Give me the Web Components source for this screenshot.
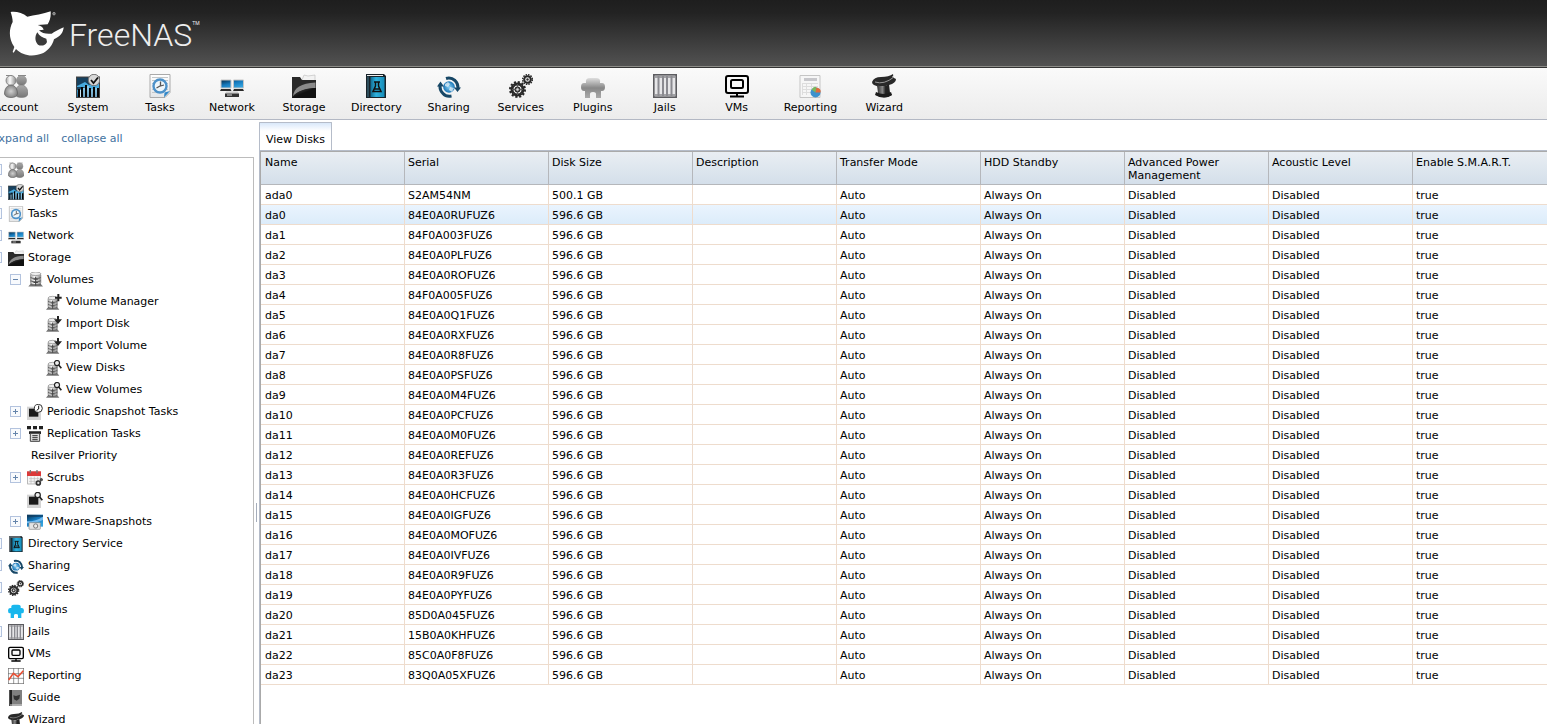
<!DOCTYPE html>
<html lang="en">
<head>
<meta charset="utf-8">
<title>FreeNAS</title>
<style>
  html, body {
    height: 100%;
    margin: 0;
    overflow: hidden;
  }
  body {
    font: 11px/13px Verdana, "DejaVu Sans", sans-serif;
    color: #000;
    background: #fff;
  }
</style>
</head>
<body>
<nas-app>
  <nas-header slot="header"></nas-header>

  <tool-bar slot="toolbar">
    <tool-button icon="account">Account</tool-button>
    <tool-button icon="system">System</tool-button>
    <tool-button icon="tasks">Tasks</tool-button>
    <tool-button icon="network">Network</tool-button>
    <tool-button icon="storage">Storage</tool-button>
    <tool-button icon="directory">Directory</tool-button>
    <tool-button icon="sharing">Sharing</tool-button>
    <tool-button icon="services">Services</tool-button>
    <tool-button icon="plugins">Plugins</tool-button>
    <tool-button icon="jails">Jails</tool-button>
    <tool-button icon="vms">VMs</tool-button>
    <tool-button icon="reporting">Reporting</tool-button>
    <tool-button icon="wizard">Wizard</tool-button>
  </tool-bar>

  <nav-tree slot="sidebar">
    <tree-node icon="account" label="Account" expandable></tree-node>
    <tree-node icon="system" label="System" expandable></tree-node>
    <tree-node icon="tasks" label="Tasks" expandable></tree-node>
    <tree-node icon="network" label="Network" expandable></tree-node>
    <tree-node icon="storage" label="Storage" expandable open>
      <tree-node icon="volumes" label="Volumes" expandable open>
        <tree-node icon="volume-add" label="Volume Manager"></tree-node>
        <tree-node icon="volume-import" label="Import Disk"></tree-node>
        <tree-node icon="volume-import" label="Import Volume"></tree-node>
        <tree-node icon="volume-view" label="View Disks"></tree-node>
        <tree-node icon="volume-view" label="View Volumes"></tree-node>
      </tree-node>
      <tree-node icon="periodic" label="Periodic Snapshot Tasks" expandable></tree-node>
      <tree-node icon="replication" label="Replication Tasks" expandable></tree-node>
      <tree-node label="Resilver Priority"></tree-node>
      <tree-node icon="scrubs" label="Scrubs" expandable></tree-node>
      <tree-node icon="snapshots" label="Snapshots"></tree-node>
      <tree-node icon="vmware" label="VMware-Snapshots" expandable></tree-node>
    </tree-node>
    <tree-node icon="directory" label="Directory Service" expandable></tree-node>
    <tree-node icon="sharing" label="Sharing" expandable></tree-node>
    <tree-node icon="services" label="Services" expandable></tree-node>
    <tree-node icon="plugins-blue" label="Plugins"></tree-node>
    <tree-node icon="jails" label="Jails" expandable></tree-node>
    <tree-node icon="vms" label="VMs"></tree-node>
    <tree-node icon="chart" label="Reporting"></tree-node>
    <tree-node icon="guide" label="Guide"></tree-node>
    <tree-node icon="wizard" label="Wizard"></tree-node>
  </nav-tree>

  <tab-pane label="View Disks">
    <disk-grid selected="da0"></disk-grid>
  </tab-pane>
</nas-app>

<script>
// Volume stack shared by the volume icons; the overlays go on top of it.
const STACK = `
  <path d="M3 20l-3 3.500h20L17 20z" fill="#777"/>
  <rect x="3" y="5" width="14" height="16" rx="3" fill="url(#metal)" stroke="#888"/>
  <ellipse cx="10" cy="6" rx="7" ry="2.500" fill="#eee" stroke="#888"/>
  <path d="M3 11c2 2 12 2 14 0M3 15.500c2 2 12 2 14 0M3 20c2 2 12 2 14 0" fill="none" stroke="#666" stroke-width="1.500"/>
  <path d="M10 10v12M7 13.500h6M7 18h6" stroke="#444" stroke-width="1.500"/>`;

const PUZZLE = "M5 9q-1-5 4-5h6q5 0 4 5h2q3 0 3 4t-3 4h-1v7h-5v-4q0-2-3-2t-3 2v4H4v-7H3q-3 0-3-4t3-4z";

const CAMERA = `
  <rect x="0" y="4" width="21" height="20" fill="#d4d4d4"/>
  <rect x="3" y="7" width="14" height="12" fill="#1b1b1b"/>`;

// Every icon is drawn on a 24 x 24 grid.
const ICONS = {
  account: `
    <circle cx="17.500" cy="6.500" r="5" fill="url(#gray)" stroke="#888" stroke-width=".6"/>
    <path d="M11 20c0-12 13-12 13 0q-1 3.500-6.500 3.500T11 20z" fill="url(#gray)" stroke="#777" stroke-width=".6"/>
    <circle cx="7" cy="6.500" r="5" fill="url(#metal)" stroke="#777" stroke-width=".8"/>
    <path d="M.5 20c0-12 13-12 13 0q-1 3.500-6.500 3.500T.5 20z" fill="url(#ball)" stroke="#666" stroke-width=".8"/>
    <path d="M2 1.500h6M14 1.500h8" stroke="#888"/>`,
  system: `
    <rect x=".5" y="3" width="23" height="20.500" fill="url(#blue)" stroke="#444"/>
    <path d="M1 4h22v5L1 16z" fill="#17415f"/>
    <path d="M1 12l8-4 4 3 5-3 5 1v4H1z" fill="#47a9dc"/>
    <path d="M2 15h2v8H2zM5 13h2v10H5zM9 11h2v12H9zM13 14h2v9h-2zM17 13h2v10h-2zM21 14h2v9h-2z" fill="#050505"/>
    <path d="M4.500 16v7M8 14v9M12 12v11M16 15v8M20 14v9" stroke="#c9e6f5"/>
    <circle cx="18" cy="6" r="5.700" fill="#d8d8d8" stroke="#777"/>
    <path d="M15 6l2.500 3L22 3.500" fill="none" stroke="#111" stroke-width="1.800"/>`,
  tasks: `
    <path d="M2 .5h20v18l-5 5H2z" fill="url(#paper)" stroke="#aaa"/>
    <path d="M4 3.500h16M4 6.500h16M4 9.500h16M4 15.500h16M4 18.500h12" stroke="#c4c8ca"/>
    <circle cx="12" cy="12" r="6.500" fill="#edf6fb" stroke="#4c91c9" stroke-width="2.400"/>
    <path d="M12.500 7.500V12l3.500-1M12 12l-3.500 2" fill="none" stroke="#555" stroke-width="1.300"/>
    <path d="M22 17l-6 6.500.5-5z" fill="#3187c8"/>`,
  network: `
    <path d="M1 6h10v8H1zM13.500 6h10v8h-10z" fill="url(#screen)" stroke="#c5c5c5"/>
    <path d="M1 15h9.500l1 2H0zM14 15h9l1 2H13z" fill="#2a2a2a"/>
    <path d="M5 19.500h14l-1.500-2h-11z" fill="#ccc"/>
    <rect x="5" y="19.500" width="14" height="3.500" fill="#333"/>
    <path d="M7 21h5" stroke="#ddd"/>`,
  storage: `
    <path d="M10 6l2-5 4 1 7-1v7H10z" fill="#f2f2f2" stroke="#bbb" stroke-width=".6"/>
    <path d="M0 3h8l2 3h14v18H0z" fill="#292929"/>
    <path d="M1 22C2 14 9 9 23.500 8.500V14C11 15 5 18 1 22z" fill="#8a8a8a"/>
    <path d="M0 24c5-8 16-10 24-10v10z" fill="url(#shade)"/>`,
  directory: `
    <path d="M2 0h18l2 2v22H2z" fill="#18232a"/>
    <path d="M3 1.500h16" stroke="#eee"/>
    <rect x="6.500" y="3" width="14" height="20" fill="url(#cyan)"/>
    <path d="M4 2.500V23" stroke="#345c6d" stroke-width="1.500"/>
    <path d="M10 8h6M11.500 8v4L9 17.500h8L14.500 12V8M10.500 15h5" fill="none" stroke="#111" stroke-width="1.500"/>`,
  sharing: `
    <circle cx="12" cy="13" r="5.800" fill="url(#globe)"/>
    <path d="M8 10l3-2 2 2-2 3-3-1zM13 13l4 1-2 4-3-2z" fill="#fff" opacity=".65"/>
    <path d="M9 4.500Q14 3 18 6.500 21.500 10 21 15M14.500 22Q9 23 6 19.500 2.500 16 3 11" fill="none" stroke="#174766" stroke-width="3"/>
    <path d="M17 13.500h7L20.500 18zM0 12.500h7L3.500 7.500z" fill="#174766"/>`,
  services: `
    <g fill="none" stroke="#292929">
      <circle cx="8.500" cy="15.500" r="7.500" stroke-width="2" stroke-dasharray="2.200 1.730"/>
      <circle cx="8.500" cy="15.500" r="5.500" stroke-width="3"/>
      <circle cx="8.500" cy="15.500" r="2" stroke-width="2"/>
      <path d="M8.500 10v11M3 15.500h11M4.500 11.500l8 8M12.500 11.500l-8 8" stroke="#555"/>
      <circle cx="18.500" cy="5.500" r="4.800" stroke-width="1.500" stroke-dasharray="1.500 1.010"/>
      <circle cx="18.500" cy="5.500" r="3.300" stroke-width="2"/>
    </g>
    <circle cx="8.500" cy="15.500" r="1.200" fill="#ddd"/>
    <circle cx="18.500" cy="5.500" r="1.200" fill="#333"/>`,
  plugins: `<path d="${PUZZLE}" fill="url(#puzzle)"/>`,
  "plugins-blue": `<path d="${PUZZLE}" fill="#19b7ed"/>`,
  jails: `
    <rect x=".8" y=".8" width="22.400" height="22.400" fill="#e6e6e8" stroke="#5c5c60" stroke-width="1.600"/>
    <path d="M5.500 2v20M10 2v20M14 2v20M18.500 2v20" stroke="#8a8a90" stroke-width="2"/>
    <path d="M2 3h20M2 21h20" stroke="#8c8c90" stroke-width="1.500"/>`,
  vms: `
    <rect x="1" y="2" width="22" height="17" rx="2" fill="#f8f8f8" stroke="#000" stroke-width="2"/>
    <rect x="6" y="6" width="12" height="8" rx="1.500" fill="#f8f8f8" stroke="#000" stroke-width="2"/>
    <path d="M12 19v3M5 22.500h14" stroke="#000" stroke-width="2"/>`,
  reporting: `
    <path d="M2 1.500h20v22H2z" fill="#f6f6f6" stroke="#c5c5c5"/>
    <path d="M6 4h13v3H6z" fill="#c7c7cb"/>
    <path d="M4 9.500h16M4 12.500h16M4 15.500h16M4 18.500h16M4.500 9v12M8.500 9v12M13.500 9v12" stroke="#ddd"/>
    <circle cx="17.500" cy="18.500" r="5" fill="#3c91cd"/>
    <path d="M17.500 18.500l-4-3q3-4 5-2z" fill="#7bb75c"/>
    <path d="M17.500 18.500l1-5q5 1 4 5z" fill="#e06a39"/>`,
  wizard: `
    <path d="M0 8q2-5 9-5 8 0 12-3 1 2-1 3l4 2q0 4-7 6-9 3-15 0-2-1-2-3z" fill="#292929"/>
    <path d="M5 11q7 3 12-1l1 9 2 2q-8 5-16 0l2-2z" fill="url(#hat)"/>
    <path d="M4 18q8 4 15 0l1 3q-8 5-17 0z" fill="#1c1c1c"/>
    <path d="M3 8q9 3 19-5" fill="none" stroke="#999"/>`,
  volumes: `<g transform="translate(2 -4) scale(1.100)">${STACK}</g>`,
  "volume-add": `${STACK}<path d="M18.500 0v11M13.500 5.500h10" stroke="#222" stroke-width="3"/>`,
  "volume-import": `${STACK}<path d="M16.500 0h3v5H24l-6 7-6-7h4.500z" fill="#222"/>`,
  "volume-view": `${STACK}
    <circle cx="16.500" cy="4.500" r="3.800" fill="#eee" stroke="#222" stroke-width="1.800"/>
    <path d="M19 7.500l4 5" stroke="#222" stroke-width="2.500"/>`,
  periodic: `${CAMERA}
    <circle cx="17" cy="6.500" r="6" fill="#fff" stroke="#333" stroke-width="1.500"/>
    <path d="M17.500 2.500v5l-3 2" fill="none" stroke="#111" stroke-width="1.500"/>`,
  replication: `
    <path d="M0 0h6v5H0zM9 0h6v5H9zM18 0h6v5h-6zM3 8h18v4H3z" fill="#222"/>
    <path d="M5 11h14v12H5z" fill="#ddd" stroke="#444" stroke-width="1.500"/>
    <path d="M8 14.500h8M8 17.500h8M8 20.500h8" stroke="#333" stroke-width="1.500"/>`,
  scrubs: `
    <rect x="1" y="3" width="19" height="18" fill="#f6f6f6" stroke="#999"/>
    <path d="M0 2h21v7H0z" fill="#dc3939"/>
    <path d="M5 0v5M15 0v5" stroke="#777" stroke-width="2"/>
    <path d="M3 13h16M3 17h16M6 10v11M11 10v11M16 10v11" stroke="#bbb"/>
    <circle cx="17" cy="19.500" r="3" fill="#ddd" stroke="#333" stroke-width="2.500"/>
    <circle cx="21.500" cy="14.500" r="1.800" fill="#555" stroke="#222"/>`,
  snapshots: `${CAMERA}
    <circle cx="16" cy="4.500" r="4" fill="#eee" stroke="#222" stroke-width="1.800"/>
    <path d="M19 7.500l4 5" stroke="#222" stroke-width="2.500"/>`,
  vmware: `
    <rect x="0" y="1" width="24" height="18" fill="url(#screen)"/>
    <path d="M0 3h24" stroke="#123d61" stroke-width="2"/>
    <path d="M0 11q14 0 24-7v5Q13 14 0 14z" fill="#71baf0"/>
    <rect x="3" y="13" width="17" height="10" rx="1" fill="#e4e4e4" stroke="#888"/>
    <circle cx="13" cy="18" r="3.200" fill="#eee" stroke="#777" stroke-width="1.500"/>`,
  chart: `
    <rect x=".7" y=".7" width="22.600" height="22.600" fill="#fff"/>
    <path d="M.7 0v24M8.500 0v24M15.500 0v24M23.300 0v24M0 .7h24M0 8.500h24M0 15.500h24M0 23.300h24" stroke="#666"/>
    <path d="M1 18l7-10 7 5 8-9" fill="none" stroke="#e94e32" stroke-width="2.400"/>`,
  guide: `
    <path d="M2 0h19v24H2z" fill="#808080"/>
    <path d="M2 0h4v24H2z" fill="#222"/>
    <path d="M3 22.500h18" stroke="#ddd" stroke-width="1.500"/>
    <path d="M8 8l4 1 6-2-1 6-4 3-4-2z" fill="#333"/>`,
};

const DEFS = `
  <defs>
    <linearGradient id="metal"><stop stop-color="#aaa"/><stop offset=".4" stop-color="#fafafa"/><stop offset="1" stop-color="#8a8a8a"/></linearGradient>
    <linearGradient id="gray" x2="0" y2="1"><stop stop-color="#aaa"/><stop offset="1" stop-color="#777"/></linearGradient>
    <radialGradient id="ball"><stop stop-color="#d0d0d0"/><stop offset="1" stop-color="#858585"/></radialGradient>
    <linearGradient id="blue" x2="0" y2="1"><stop stop-color="#16334b"/><stop offset=".5" stop-color="#4bb0e2"/><stop offset="1" stop-color="#145a88"/></linearGradient>
    <linearGradient id="paper" x2="0" y2="1"><stop stop-color="#fff"/><stop offset="1" stop-color="#e4e6e8"/></linearGradient>
    <linearGradient id="screen" x2=".7" y2="1"><stop stop-color="#062d4b"/><stop offset=".5" stop-color="#1579bd"/><stop offset="1" stop-color="#35a4df"/></linearGradient>
    <linearGradient id="shade" x2="1" y2="1"><stop stop-color="#555"/><stop offset=".5" stop-color="#111"/></linearGradient>
    <linearGradient id="cyan"><stop stop-color="#116b91"/><stop offset=".4" stop-color="#2eb2df"/><stop offset="1" stop-color="#168cb8"/></linearGradient>
    <radialGradient id="globe"><stop stop-color="#8cd1f4"/><stop offset="1" stop-color="#1673b5"/></radialGradient>
    <linearGradient id="puzzle" x2="0" y2="1"><stop stop-color="#dedede"/><stop offset=".5" stop-color="#888"/><stop offset="1" stop-color="#aaa"/></linearGradient>
    <linearGradient id="hat"><stop stop-color="#1b1b1b"/><stop offset=".4" stop-color="#888"/><stop offset=".6" stop-color="#222"/></linearGradient>
  </defs>`;

/**
 * <nas-icon name="..."> draws one entry of ICONS. The icon is 24px
 * wide unless its user sets --icon-size.
 */
class NasIcon extends HTMLElement {
  constructor() {
    super();
    this.attachShadow({ mode: "open" });
  }

  connectedCallback() {
    this.shadowRoot.innerHTML = `
      <style>
        :host {
          display: block;
          flex: none;
          width: var(--icon-size, 24px);
          height: var(--icon-size, 24px);
        }
        svg { display: block; width: 100%; height: 100%; }
      </style>
      <svg viewBox="0 0 24 24" aria-hidden="true">${DEFS}${ICONS[this.getAttribute("name")]}</svg>
    `;
  }
}

/**
 * The page frame. It has the slots "header", "toolbar" and "sidebar",
 * and everything else goes to the right of the splitter.
 */
class NasApp extends HTMLElement {
  constructor() {
    super();
    this.attachShadow({ mode: "open" });
    this.shadowRoot.append(NasApp.template.content.cloneNode(true));
  }
}

NasApp.template = document.createElement("template");
NasApp.template.innerHTML = `
  <style>
    :host {
      display: flex;
      flex-direction: column;
      height: 100vh;
      overflow: hidden;
    }
    .body {
      display: flex;
      flex: 1;
      min-height: 0;
      padding-top: 2px;
    }
    aside {
      flex: none;
      width: 254px;
      overflow: hidden;
    }
    .splitter {
      flex: none;
      display: flex;
      align-items: center;
      justify-content: center;
      width: 5px;
    }
    .thumb {
      width: 1px;
      height: 19px;
      margin-top: 178px;
      background: #a5adbb;
    }
    main {
      flex: 1;
      min-width: 0;
      overflow: hidden;
    }
  </style>
  <slot name="header"></slot>
  <slot name="toolbar"></slot>
  <div class="body">
    <aside><slot name="sidebar"></slot></aside>
    <div class="splitter"><div class="thumb"></div></div>
    <main><slot></slot></main>
  </div>
`;

class NasHeader extends HTMLElement {
  constructor() {
    super();
    this.attachShadow({ mode: "open" });
    this.shadowRoot.append(NasHeader.template.content.cloneNode(true));
  }
}

NasHeader.template = document.createElement("template");
NasHeader.template.innerHTML = `
  <style>
    :host {
      display: flex;
      flex: none;
      height: 66px;
      border-bottom: 1px solid #8c8c88;
      background: linear-gradient(#1e1e1e, #232323 20%, #525252);
      color: #eee;
    }
    a {
      display: flex;
      align-items: flex-start;
      color: inherit;
      text-decoration: none;
    }
    svg { width: 65px; height: 57px; }
    .name {
      margin: 15px 0 0 4px;
      font: 300 32px/40px Roboto, sans-serif;
    }
    .tm {
      margin-top: 20px;
      font: 5px/6px Roboto, sans-serif;
    }
  </style>
  <a href="#" aria-label="FreeNAS">
    <svg viewBox="0 0 195 171" aria-hidden="true">
      <path fill="#fff" d="M32 36C48 34 68 38 82 50 102 46 130 42 152 34 153 50 150 62 143 73L113 75C123 78 129 82 131 89L117 91C125 100 140 103 155 101 162 97 175 88 191 82 190 97 182 109 162 118 158 135 146 150 130 159 100 172 68 168 48 147L41 158 38 156 43 141C26 118 26 88 38 66 38 56 35 46 32 36z"/>
      <path fill="#3a3a3a" d="M112 97C104 108 104 124 114 134 122 139 136 138 141 126L139 116C128 114 118 108 112 97z"/>
      <circle cx="162" cy="41" r="4" fill="#777" stroke="#aaa" stroke-width="2"/>
    </svg>
    <span class="name">FreeNAS</span><span class="tm">TM</span>
  </a>
`;

class ToolBar extends HTMLElement {
  constructor() {
    super();
    this.attachShadow({ mode: "open" });
    this.shadowRoot.append(ToolBar.template.content.cloneNode(true));
  }
}

ToolBar.template = document.createElement("template");
ToolBar.template.innerHTML = `
  <style>
    :host {
      display: flex;
      flex: none;
      height: 51px;
      border-top: 1px solid #333;
      border-bottom: 1px solid #b3b8c4;
      background: linear-gradient(#fafafa, #ececec);
      overflow: hidden;
    }
    nav {
      display: flex;
      margin-left: -20px;
    }
  </style>
  <nav><slot></slot></nav>
`;

class ToolButton extends HTMLElement {
  constructor() {
    super();
    this.attachShadow({ mode: "open" });
  }

  connectedCallback() {
    this.shadowRoot.innerHTML = `
      <style>
        :host { display: block; min-width: 72px; }
        button {
          display: flex;
          flex-direction: column;
          align-items: center;
          gap: 3px;
          width: 100%;
          padding: 6px 11px 0;
          border: 0;
          background: none;
          color: inherit;
          font: inherit;
          cursor: pointer;
        }
      </style>
      <button type="button">
        <nas-icon name="${this.getAttribute("icon")}"></nas-icon>
        <slot></slot>
      </button>
    `;
  }
}

class NavTree extends HTMLElement {
  constructor() {
    super();
    this.attachShadow({ mode: "open" });
    this.shadowRoot.append(NavTree.template.content.cloneNode(true));

    this.shadowRoot.querySelector("#expand").onclick = () => this.setAll(true);
    this.shadowRoot.querySelector("#collapse").onclick = () => this.setAll(false);
  }

  setAll(open) {
    for (let node of this.querySelectorAll("tree-node[expandable]")) {
      node.toggleAttribute("open", open);
    }
  }
}

NavTree.template = document.createElement("template");
NavTree.template.innerHTML = `
  <style>
    :host { display: block; }
    .links {
      display: flex;
      gap: 12px;
      margin-left: -8px;
      padding: 10px 0 12px;
    }
    a {
      color: #3f72a0;
      text-decoration: none;
    }
    .tree {
      margin-left: -10px;
      border: 1px solid #bcbcbc;
    }
  </style>
  <div class="links">
    <a id="expand" href="#">expand all</a>
    <a id="collapse" href="#">collapse all</a>
  </div>
  <div class="tree"><slot></slot></div>
`;

/**
 * One row of the tree; nested <tree-node> children are indented one
 * level and are only shown while the "open" attribute is set.
 */
class TreeNode extends HTMLElement {
  constructor() {
    super();
    this.attachShadow({ mode: "open" });
  }

  connectedCallback() {
    let icon = this.getAttribute("icon");
    this.shadowRoot.innerHTML = `
      <style>
        :host { display: block; }
        .row {
          display: flex;
          height: 22px;
        }
        .toggle {
          flex: none;
          width: 17px;
          padding-top: 6px;
        }
        button {
          display: block;
          position: relative;
          width: 11px;
          height: 11px;
          padding: 0;
          border: 1px solid #b3c3de;
          background: #f8fafd;
        }
        button::before,
        :host(:not([open])) button::after {
          content: "";
          position: absolute;
          inset: 4px 2px;
          background: #6484ab;
        }
        :host(:not([open])) button::after { inset: 2px 4px; }
        nas-icon {
          --icon-size: 16px;
          margin-top: 4px;
        }
        a {
          padding: 5px 0 0 4px;
          color: inherit;
          text-decoration: none;
          white-space: nowrap;
        }
        .children {
          display: none;
          padding-left: 19px;
        }
        :host([open]) .children { display: block; }
      </style>
      <div class="row">
        <div class="toggle">
          ${this.hasAttribute("expandable") ? `<button type="button" aria-label="Toggle"></button>` : ""}
        </div>
        ${icon ? `<nas-icon name="${icon}"></nas-icon>` : ""}
        <a href="#">${this.getAttribute("label")}</a>
      </div>
      <div class="children"><slot></slot></div>
    `;

    let button = this.shadowRoot.querySelector("button");
    if (button) {
      button.onclick = () => this.toggleAttribute("open");
    }
  }
}

class TabPane extends HTMLElement {
  constructor() {
    super();
    this.attachShadow({ mode: "open" });
  }

  connectedCallback() {
    this.shadowRoot.innerHTML = `
      <style>
        :host {
          display: flex;
          flex-direction: column;
          height: 100%;
        }
        button {
          align-self: flex-start;
          padding: 10px 6px 4px;
          border: 1px solid #b5bcc9;
          border-bottom: 0;
          border-radius: 1px 1px 0 0;
          background: linear-gradient(#d9e8fa, #fff 8px);
          color: inherit;
          font: inherit;
        }
        .content {
          flex: 1;
          min-height: 0;
          border-left: 1px solid #b5bcc9;
          border-top: 1px solid #b5bcc9;
          overflow: hidden;
        }
      </style>
      <button type="button" role="tab" aria-selected="true">${this.getAttribute("label")}</button>
      <div class="content"><slot></slot></div>
    `;
  }
}

const COLUMNS = [
  "Name", "Serial", "Disk Size", "Description", "Transfer Mode",
  "HDD Standby", "Advanced Power Management", "Acoustic Level",
  "Enable S.M.A.R.T.",
];

// name, serial, size
const DISKS = [
  ["ada0", "S2AM54NM", "500.1 GB"],
  ["da0", "84E0A0RUFUZ6", "596.6 GB"],
  ["da1", "84F0A003FUZ6", "596.6 GB"],
  ["da2", "84E0A0PLFUZ6", "596.6 GB"],
  ["da3", "84E0A0ROFUZ6", "596.6 GB"],
  ["da4", "84F0A005FUZ6", "596.6 GB"],
  ["da5", "84E0A0Q1FUZ6", "596.6 GB"],
  ["da6", "84E0A0RXFUZ6", "596.6 GB"],
  ["da7", "84E0A0R8FUZ6", "596.6 GB"],
  ["da8", "84E0A0PSFUZ6", "596.6 GB"],
  ["da9", "84E0A0M4FUZ6", "596.6 GB"],
  ["da10", "84E0A0PCFUZ6", "596.6 GB"],
  ["da11", "84E0A0M0FUZ6", "596.6 GB"],
  ["da12", "84E0A0REFUZ6", "596.6 GB"],
  ["da13", "84E0A0R3FUZ6", "596.6 GB"],
  ["da14", "84E0A0HCFUZ6", "596.6 GB"],
  ["da15", "84E0A0IGFUZ6", "596.6 GB"],
  ["da16", "84E0A0MOFUZ6", "596.6 GB"],
  ["da17", "84E0A0IVFUZ6", "596.6 GB"],
  ["da18", "84E0A0R9FUZ6", "596.6 GB"],
  ["da19", "84E0A0PYFUZ6", "596.6 GB"],
  ["da20", "85D0A045FUZ6", "596.6 GB"],
  ["da21", "15B0A0KHFUZ6", "596.6 GB"],
  ["da22", "85C0A0F8FUZ6", "596.6 GB"],
  ["da23", "83Q0A05XFUZ6", "596.6 GB"],
];

/**
 * The table of disks. The row whose name is in the "selected"
 * attribute is highlighted.
 */
class DiskGrid extends HTMLElement {
  constructor() {
    super();
    this.attachShadow({ mode: "open" });
    this.shadowRoot.append(DiskGrid.template.content.cloneNode(true));
  }

  connectedCallback() {
    let head = this.shadowRoot.querySelector("thead tr");
    for (let column of COLUMNS) {
      let th = document.createElement("th");
      th.scope = "col";
      th.textContent = column;
      head.append(th);
    }

    let body = this.shadowRoot.querySelector("tbody");
    for (let [name, serial, size] of DISKS) {
      let row = body.insertRow();
      row.classList.toggle("selected", name === this.getAttribute("selected"));
      let values = [name, serial, size, "", "Auto", "Always On", "Disabled", "Disabled", "true"];
      for (let value of values) {
        row.insertCell().textContent = value;
      }
    }
  }
}

DiskGrid.template = document.createElement("template");
DiskGrid.template.innerHTML = `
  <style>
    :host {
      display: block;
      height: 100%;
      border-left: 1px solid #aaa;
      border-top: 1px solid #aaa;
    }
    table {
      width: 1296px;
      table-layout: fixed;
      border-collapse: separate;
      border-spacing: 0;
    }
    th, td {
      box-sizing: border-box;
      padding: 4px 3px 2px;
      text-align: left;
      vertical-align: top;
      font-weight: normal;
    }
    th:first-child, td:first-child { padding-left: 4px; }
    th {
      height: 33px;
      border-right: 1px solid #b5b7bb;
      border-bottom: 1px solid #b5b7bb;
      background: linear-gradient(#e9eef3, #d4dfea);
    }
    td {
      height: 20px;
      border-right: 1px solid #eedccd;
      border-bottom: 1px solid #eedccd;
    }
    .selected td { background: linear-gradient(#eaf4fe, #dcecfa); }
  </style>
  <table>
    <thead><tr></tr></thead>
    <tbody></tbody>
  </table>
`;

customElements.define("nas-icon", NasIcon);
customElements.define("nas-app", NasApp);
customElements.define("nas-header", NasHeader);
customElements.define("tool-bar", ToolBar);
customElements.define("tool-button", ToolButton);
customElements.define("nav-tree", NavTree);
customElements.define("tree-node", TreeNode);
customElements.define("tab-pane", TabPane);
customElements.define("disk-grid", DiskGrid);
</script>
</body>
</html>
